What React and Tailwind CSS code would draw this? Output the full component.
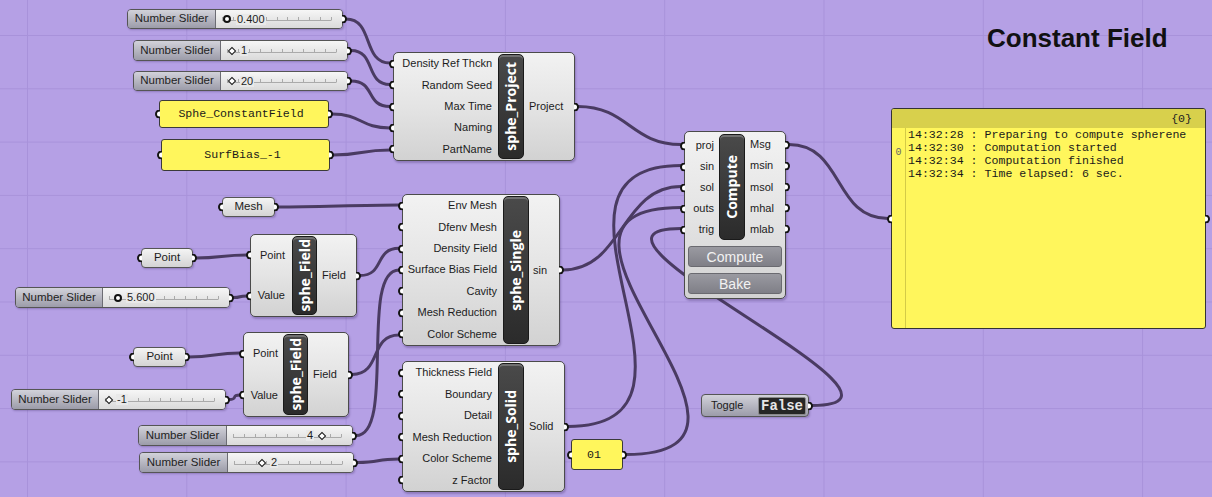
import React from "react";

const SANS = "font-['Liberation_Sans',Arial,sans-serif]";
const MONO = "font-['Liberation_Mono','Courier_New',monospace]";
const OPEN = "font-['Open_Sans','Liberation_Sans',sans-serif]";

function InPort() {
  return (
    <span className="absolute left-[-5px] top-1/2 h-[9px] w-[5px] -translate-y-1/2 rounded-l-full border-2 border-r-0 border-[#141414] bg-white" />
  );
}
function OutPort() {
  return (
    <span className="absolute right-[-5px] top-1/2 h-[9px] w-[5px] -translate-y-1/2 rounded-r-full border-2 border-l-0 border-[#141414] bg-white" />
  );
}

function Ports({ labels, side, pad }) {
  return (
    <div className="flex flex-1 flex-col">
      {labels.map((l) => (
        <div
          key={l}
          className={`relative flex flex-1 items-center whitespace-nowrap text-[11px] leading-none text-[#1c1c1c] ${
            side === "in" ? "justify-end" : "justify-start"
          } ${pad}`}
        >
          {l}
          {side === "in" ? <InPort /> : <OutPort />}
        </div>
      ))}
    </div>
  );
}

function Bar({ name, className }) {
  return (
    <div
      className={`flex shrink-0 items-center justify-center rounded-[5px] border border-[#1a1a1a] bg-linear-to-b from-[#4a4a4a] to-[#2b2b2b] shadow-[inset_0_2px_0_rgba(255,255,255,0.22)] ${className}`}
    >
      <span className={`${OPEN} rotate-180 whitespace-nowrap text-[14px] font-bold leading-none text-white [writing-mode:vertical-rl]`}>
        {name}
      </span>
    </div>
  );
}

const BODY =
  "rounded-[5px] border border-[#4b4b4b] bg-linear-to-b from-[#f2f2f2] via-[#e4e4e4] to-[#d2d2d2] shadow-[1px_2px_2px_rgba(60,40,100,0.3)]";

function Comp({ x, y, w, h, inW, barCls, name, inputs, outputs, inPad, outPad }) {
  return (
    <div className={`absolute flex ${BODY} ${SANS}`} style={{ left: x, top: y, width: w, height: h }}>
      <div className="flex shrink-0 flex-col" style={{ width: inW }}>
        <Ports labels={inputs} side="in" pad={inPad} />
      </div>
      <Bar name={name} className={barCls} />
      <Ports labels={outputs} side="out" pad={outPad} />
    </div>
  );
}

function Ticks({ vw, h }) {
  const x0 = 6;
  const x1 = vw - 10;
  const yl = Math.round(h / 2) + 1;
  const ticks = Array.from({ length: 11 }, (_, i) => Math.round(x0 + ((x1 - x0) * i) / 10) + 0.5);
  return (
    <svg className="absolute left-0 top-0" width={vw} height={h}>
      <line x1={x0} y1={yl + 0.5} x2={x1} y2={yl + 0.5} stroke="#aaaaaa" strokeWidth="1" />
      {ticks.map((t, i) => (
        <line key={i} x1={t} y1={yl - 3} x2={t} y2={yl + 0.5} stroke="#aaaaaa" strokeWidth="1" />
      ))}
    </svg>
  );
}

function Circle() {
  return <span className="relative h-[8px] w-[8px] shrink-0 rounded-full border-2 border-[#111] bg-white" />;
}
function Diamond() {
  return <span className="relative h-[6px] w-[6px] shrink-0 rotate-45 border-[1.5px] border-[#111] bg-white" />;
}
function Val({ s }) {
  return <span className="relative bg-[#e9e9e9] px-[1px] text-[11px] leading-none text-[#1c1c1c]">{s}</span>;
}

function Slider({ x, y, w, h, lw, pl, gap, children }) {
  return (
    <div
      className={`absolute flex rounded-[4px] border border-[#555] shadow-[1px_1px_2px_rgba(60,40,100,0.3)] ${SANS}`}
      style={{ left: x, top: y, width: w, height: h }}
    >
      <div
        className="flex shrink-0 items-center justify-center rounded-l-[3px] border-r border-[#6c6c74] bg-linear-to-b from-[#d2d2da] to-[#9c9ca9] text-[11.5px] leading-none text-[#222]"
        style={{ width: lw - 1 }}
      >
        Number Slider
      </div>
      <div className={`relative flex flex-1 items-center rounded-r-[3px] bg-linear-to-b from-[#f6f6f6] to-[#dadada] ${pl} ${gap}`}>
        <Ticks vw={w - lw - 2} h={h - 2} />
        {children}
      </div>
      <OutPort />
    </div>
  );
}

function Param({ x, y, w, h = 20, label }) {
  return (
    <div
      className={`absolute flex items-center justify-center rounded-[4px] border border-[#555] bg-linear-to-b from-[#f4f4f4] to-[#d4d4d4] text-[11.5px] leading-none text-[#1c1c1c] shadow-[1px_1px_2px_rgba(60,40,100,0.3)] ${SANS}`}
      style={{ left: x, top: y, width: w, height: h }}
    >
      {label}
      <InPort />
      <OutPort />
    </div>
  );
}

function Panel({ x, y, w, h, text }) {
  return (
    <div
      className={`absolute flex items-center justify-center rounded-[3px] border border-[#3a3a3a] bg-[#fff65c] pr-[6px] text-[11.6px] leading-none text-[#1a1a1a] ${MONO}`}
      style={{ left: x, top: y, width: w, height: h }}
    >
      {text}
      <InPort />
      <OutPort />
    </div>
  );
}

const W = (x1, y1, x2, y2, d) => `M${x1} ${y1} C${x1 + d} ${y1} ${x2 - d} ${y2} ${x2} ${y2}`;

const wires = [
  W(346, 19, 390, 63, 28),
  W(351, 50.5, 390, 84.5, 25),
  W(351, 81, 390, 106.5, 25),
  W(332, 114, 390, 128, 30),
  W(333, 155, 390, 150, 30),
  W(578, 106.5, 681, 144.5, 50),
  W(278, 207, 399, 205, 40),
  W(196, 258, 247, 255, 25),
  W(233, 297.5, 247, 296, 10),
  W(360, 275.5, 399, 248.3, 25),
  W(356, 435.5, 399, 270, 40),
  W(352, 374.5, 399, 335, 30),
  W(189, 357, 240, 353, 25),
  W(229, 399.5, 240, 395, 10),
  W(357, 462.5, 399, 459, 25),
  W(563, 270, 681, 186.5, 60),
  W(568, 426.5, 681, 165.5, 170),
  W(626, 454.5, 681, 207.5, 190),
  W(812, 405.5, 681, 228.5, 140),
  W(789, 144.5, 888, 218.5, 55),
];

const lines = [
  "14:32:28 : Preparing to compute spherene",
  "14:32:30 : Computation started",
  "14:32:34 : Computation finished",
  "14:32:34 : Time elapsed: 6 sec.",
];

const BTN =
  "flex h-[21px] items-center justify-center rounded-[3px] border border-[#6a6a70] bg-linear-to-b from-[#9a9aa1] to-[#7f7f87] text-[14px] leading-none text-[#f2f2f2]";

export default function App() {
  return (
    <div className="relative h-[497px] w-[1212px] overflow-hidden bg-[#b5a0e5] bg-[linear-gradient(to_right,#a892da_1px,transparent_1px),linear-gradient(to_bottom,#a892da_1px,transparent_1px)] bg-[size:159.3px_53.3px] bg-[position:27px_35px]">
      <svg className="absolute left-0 top-0" width="1212" height="497">
        {wires.map((d, i) => (
          <path key={i} d={d} fill="none" stroke="#4a3b62" strokeWidth="3" strokeLinecap="round" />
        ))}
      </svg>

      <div className={`absolute left-[987px] top-[23px] text-[26px] font-bold leading-[30px] text-[#111] ${SANS}`}>Constant Field</div>

      <Slider x={127} y={9} w={216} h={20} lw={89} pl="pl-[7px]" gap="gap-[5px]">
        <Circle />
        <Val s="0.400" />
      </Slider>
      <Slider x={133} y={40} w={215} h={21} lw={88} pl="pl-[8px]" gap="gap-[5px]">
        <Diamond />
        <Val s="1" />
      </Slider>
      <Slider x={133} y={71} w={215} h={20} lw={88} pl="pl-[8px]" gap="gap-[5px]">
        <Diamond />
        <Val s="20" />
      </Slider>
      <Slider x={15} y={287} w={215} h={21} lw={88} pl="pl-[11px]" gap="gap-[4px]">
        <Circle />
        <Val s="5.600" />
      </Slider>
      <Slider x={11} y={389} w={215} h={21} lw={88} pl="pl-[7px]" gap="gap-[4px]">
        <Diamond />
        <Val s="-1" />
      </Slider>
      <Slider x={138} y={425} w={215} h={21} lw={89} pl="pl-[79px]" gap="gap-[5px]">
        <Val s="4" />
        <Diamond />
      </Slider>
      <Slider x={139} y={452} w={215} h={21} lw={89} pl="pl-[31px]" gap="gap-[5px]">
        <Diamond />
        <Val s="2" />
      </Slider>

      <Panel x={159} y={100} w={170} h={28} text="Sphe_ConstantField" />
      <Panel x={161} y={139} w={169} h={32} text="SurfBias_-1" />
      <Panel x={571} y={439} w={52} h={31} text="01" />

      <Param x={222} y={197} w={53} label="Mesh" />
      <Param x={141} y={248} w={52} label="Point" />
      <Param x={133} y={347} w={53} label="Point" />

      <Comp
        x={393}
        y={52}
        w={182}
        h={109}
        inW={104}
        barCls="my-px w-[26px]"
        name="sphe_Project"
        inputs={["Density Ref Thckn", "Random Seed", "Max Time", "Naming", "PartName"]}
        outputs={["Project"]}
        inPad="pr-[6px]"
        outPad="pl-[5px]"
      />

      <Comp
        x={402}
        y={194}
        w={158}
        h={152}
        inW={100}
        barCls="my-px w-[26px]"
        name="sphe_Single"
        inputs={["Env Mesh", "Dfenv Mesh", "Density Field", "Surface Bias Field", "Cavity", "Mesh Reduction", "Color Scheme"]}
        outputs={["sin"]}
        inPad="pr-[6px]"
        outPad="pl-[4px]"
      />

      <Comp
        x={402}
        y={361}
        w={163}
        h={131}
        inW={95}
        barCls="my-px w-[26px]"
        name="sphe_Solid"
        inputs={["Thickness Field", "Boundary", "Detail", "Mesh Reduction", "Color Scheme", "z Factor"]}
        outputs={["Solid"]}
        inPad="pr-[6px]"
        outPad="pl-[5px]"
      />

      <Comp
        x={250}
        y={234}
        w={107}
        h={83}
        inW={41}
        barCls="my-px w-[25px]"
        name="sphe_Field"
        inputs={["Point", "Value"]}
        outputs={["Field"]}
        inPad="pr-[7px]"
        outPad="pl-[5px]"
      />
      <Comp
        x={243}
        y={332}
        w={106}
        h={85}
        inW={39}
        barCls="my-px w-[25px]"
        name="sphe_Field"
        inputs={["Point", "Value"]}
        outputs={["Field"]}
        inPad="pr-[5px]"
        outPad="pl-[5px]"
      />

      <div className={`absolute left-[684px] top-[131px] flex h-[168px] w-[102px] flex-col ${BODY} ${SANS}`}>
        <div className="flex h-[108px] pt-[2px]">
          <div className="flex w-[34px] shrink-0 flex-col pt-px">
            <Ports labels={["proj", "sin", "sol", "outs", "trig"]} side="in" pad="pr-[5px]" />
          </div>
          <Bar name="Compute" className="w-[26px]" />
          <Ports labels={["Msg", "msin", "msol", "mhal", "mlab"]} side="out" pad="pl-[5px]" />
        </div>
        <div className="mt-[6px] flex flex-col gap-[6px] px-[3px]">
          <div className={BTN}>Compute</div>
          <div className={BTN}>Bake</div>
        </div>
      </div>

      <div
        className={`absolute left-[701px] top-[394px] flex h-[23px] w-[108px] items-center justify-between rounded-[4px] border border-[#555] bg-linear-to-b from-[#d2d2da] to-[#9c9ca9] pl-[9px] pr-[2px] shadow-[1px_1px_2px_rgba(60,40,100,0.3)] ${SANS}`}
      >
        <span className="text-[11px] leading-none text-[#1c1c1c]">Toggle</span>
        <div
          className={`flex h-[18px] w-[48px] items-center justify-center rounded-[2px] border border-[#8a8a8a] bg-[#262626] text-[14px] font-bold leading-none text-[#e6e6e6] ${MONO}`}
        >
          False
        </div>
        <OutPort />
      </div>

      <div className={`absolute left-[891px] top-[108px] flex h-[221px] w-[315px] flex-col rounded-[3px] border border-[#333] bg-[#fff65c] ${MONO}`}>
        <div className="flex h-[19px] shrink-0 items-center justify-end rounded-t-[2px] bg-[#d8d04c] pr-[13px]">
          <span className="text-[11.6px] leading-none text-[#222]">{"{0}"}</span>
        </div>
        <div className="flex flex-1">
          <div className="flex w-[14px] shrink-0 items-start justify-center border-r border-[#d4cb47] pt-[20px]">
            <span className="text-[10px] leading-none text-[#666]">0</span>
          </div>
          <div className="whitespace-pre pl-[2px] text-[11.6px] leading-[13px] text-[#1a1a1a]">{lines.join("\n")}</div>
        </div>
        <InPort />
        <OutPort />
      </div>
    </div>
  );
}
